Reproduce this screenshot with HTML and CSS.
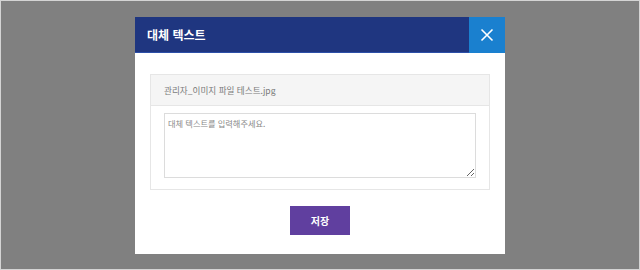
FILE: index.html
```html
<!DOCTYPE html>
<html lang="ko">
<head>
<meta charset="utf-8">
<link rel="stylesheet" href="styles.css">
</head>
<body>
<div class="frame">
  <div class="modal">
    <div class="modal-head">
      <h1 class="modal-title">대체 텍스트</h1>
      <button class="close" type="button" aria-label="닫기">
        <svg width="14" height="14" viewBox="0 0 14 14"><path d="M1.5 1.5 L12.5 12.5 M12.5 1.5 L1.5 12.5" stroke="#fff" stroke-width="1.6" fill="none"/></svg>
      </button>
    </div>
    <div class="modal-body">
      <div class="panel">
        <div class="panel-head">관리자_이미지 파일 테스트.jpg</div>
        <div class="panel-body">
          <textarea class="alt-input" placeholder="대체 텍스트를 입력해주세요."></textarea>
        </div>
      </div>
      <div class="actions">
        <button class="save" type="button">저장</button>
      </div>
    </div>
  </div>
</div>
</body>
</html>
```
FILE: styles.css
```css
* { box-sizing: border-box; }
html, body { margin: 0; padding: 0; }
body {
  font-family: "Noto Sans CJK KR", "Noto Sans", sans-serif;
  width: 640px;
  height: 270px;
  overflow: hidden;
}
.frame {
  width: 640px;
  height: 270px;
  background: #808080;
  border: 1px solid #d4d4d4;
  display: flex;
  justify-content: center;
  align-items: flex-start;
  padding-top: 16px;
}
.modal {
  width: 370px;
  height: 237px;
  background: #fff;
  display: flex;
  flex-direction: column;
}
.modal-head {
  height: 36px;
  background: #1f3680;
  border-bottom: 1px solid #2c4fa8;
  display: flex;
  align-items: stretch;
}
.modal-title {
  flex: 1;
  margin: 0;
  padding-left: 12px;
  color: #fff;
  font-size: 12px;
  font-weight: 700;
  line-height: 35px;
}
.close {
  width: 36px;
  margin: 0 0 -1px 0;
  padding: 0;
  border: 0;
  background: #1a80cf;
  display: flex;
  align-items: center;
  justify-content: center;
}
.modal-body {
  padding: 21px 15px 0;
  display: flex;
  flex-direction: column;
}
.panel {
  border: 1px solid #e6e6e6;
  height: 116px;
}
.panel-head {
  height: 31px;
  background: #f5f5f5;
  border-bottom: 1px solid #e6e6e6;
  padding-left: 13px;
  font-size: 8.6px;
  color: #7a7a7a;
  line-height: 30px;
}
.panel-body {
  padding: 7px 13px 0;
}
.alt-input {
  display: block;
  width: 312px;
  height: 65px;
  border: 1px solid #dcdcdc;
  padding: 3px 3px;
  margin: 0;
  font-family: "Noto Sans CJK KR", "Noto Sans", sans-serif;
  font-size: 8.2px;
  color: #555;
  resize: vertical;
  outline: none;
}
.alt-input::placeholder { color: #888; }
.actions {
  display: flex;
  justify-content: center;
  padding-top: 16px;
}
.save {
  width: 60px;
  height: 29px;
  border: 0;
  padding: 0;
  background: #603f9f;
  color: #fff;
  font-family: "Noto Sans CJK KR", "Noto Sans", sans-serif;
  font-size: 10px;
  font-weight: 700;
}
```
